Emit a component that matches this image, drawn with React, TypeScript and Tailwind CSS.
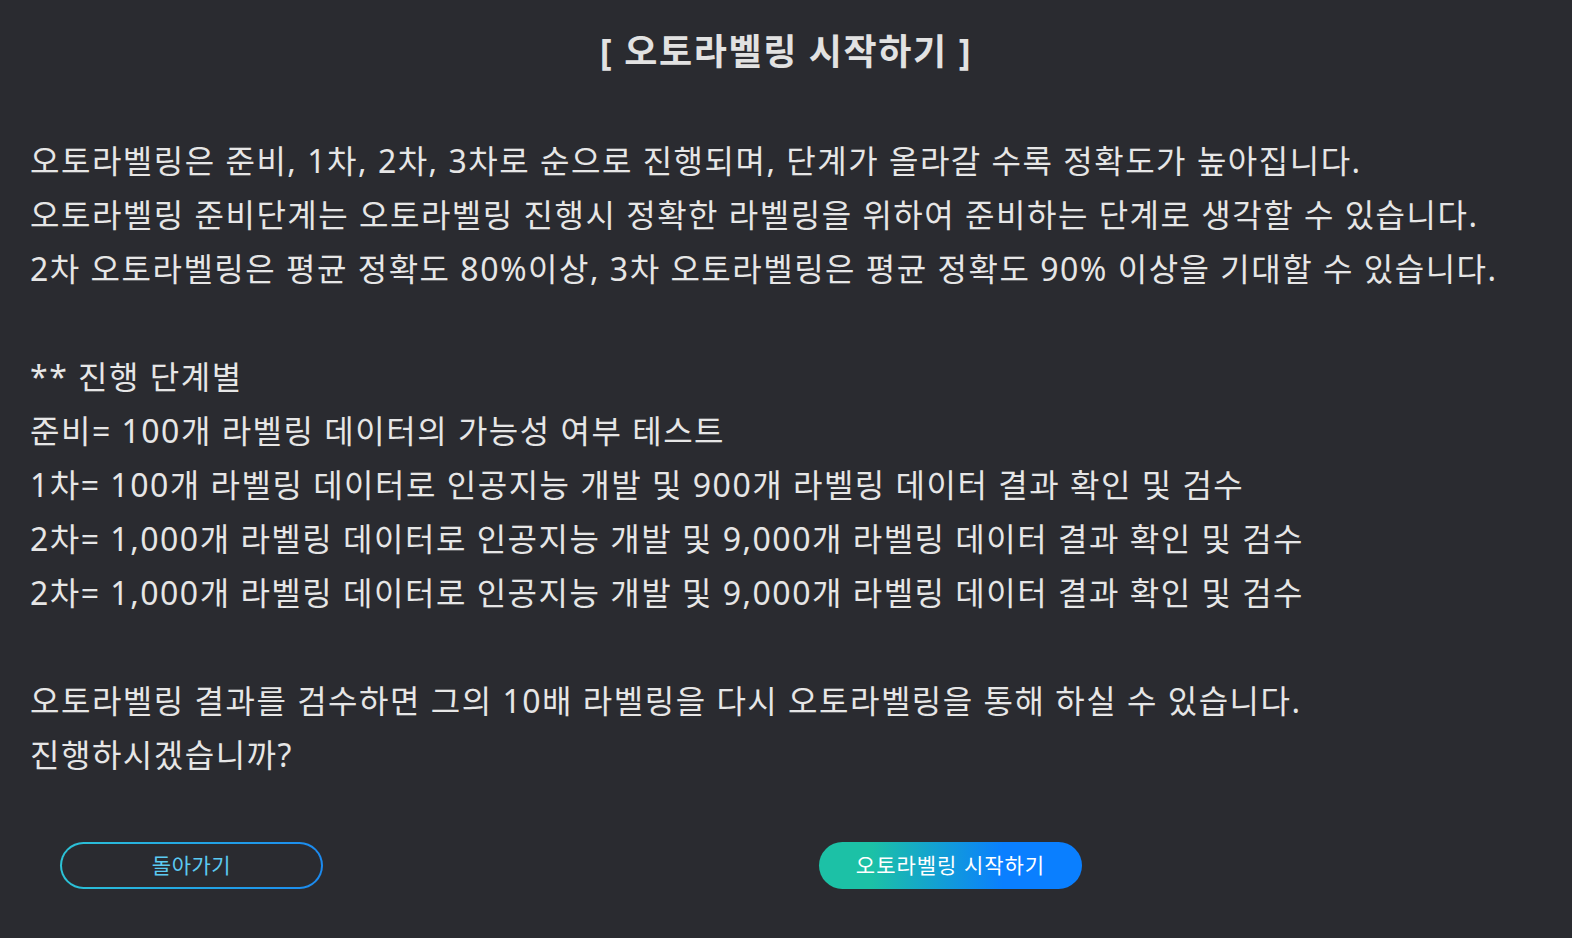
import React from "react";

const lines: string[] = [
  "오토라벨링은 준비, 1차, 2차, 3차로 순으로 진행되며, 단계가 올라갈 수록 정확도가 높아집니다.",
  "오토라벨링 준비단계는 오토라벨링 진행시 정확한 라벨링을 위하여 준비하는 단계로 생각할 수 있습니다.",
  "2차 오토라벨링은 평균 정확도 80%이상, 3차 오토라벨링은 평균 정확도 90% 이상을 기대할 수 있습니다.",
  "",
  "** 진행 단계별",
  "준비= 100개 라벨링 데이터의 가능성 여부 테스트",
  "1차= 100개 라벨링 데이터로 인공지능 개발 및 900개 라벨링 데이터 결과 확인 및 검수",
  "2차= 1,000개 라벨링 데이터로 인공지능 개발 및 9,000개 라벨링 데이터 결과 확인 및 검수",
  "2차= 1,000개 라벨링 데이터로 인공지능 개발 및 9,000개 라벨링 데이터 결과 확인 및 검수",
  "",
  "오토라벨링 결과를 검수하면 그의 10배 라벨링을 다시 오토라벨링을 통해 하실 수 있습니다.",
  "진행하시겠습니까?",
];

export default function App() {
  return (
    <div
      className="min-h-screen w-full bg-[#2a2b30] text-[#e6e6e6]"
      style={{ fontFamily: '"Noto Sans", "Noto Sans CJK KR", sans-serif' }}
    >
      <h1 className="pt-[28px] text-center text-[36px] font-bold leading-[48px] tracking-[1.6px] text-[#e2e2e2]">
        [ 오토라벨링 시작하기 ]
      </h1>
      <div className="mt-[58px] px-[30px] text-[32px] leading-[54px] tracking-[1.5px]">
        {lines.map((l, i) => (
          <div key={i} className="h-[54px] whitespace-pre">
            {l}
          </div>
        ))}
      </div>
      <div className="mt-[60px] flex pl-[60px] gap-[496px]">
        <div className="h-[47px] w-[263px] rounded-full bg-[linear-gradient(90deg,#2cc3d6,#1b8af0)] p-[2px]">
          <button className="flex h-full w-full items-center justify-center rounded-full bg-[#2a2b30] text-[21px] tracking-[0.5px] text-[#5ccaf2]">
            돌아가기
          </button>
        </div>
        <button className="flex h-[47px] w-[263px] items-center justify-center rounded-full bg-[linear-gradient(90deg,#1cc1a6_20%,#0a7fff_70%)] text-[21px] tracking-[1px] text-white">
          오토라벨링 시작하기
        </button>
      </div>
    </div>
  );
}
